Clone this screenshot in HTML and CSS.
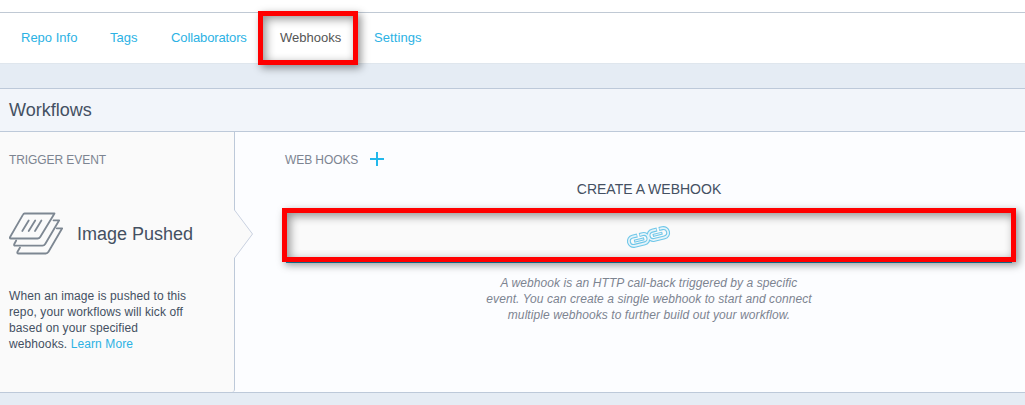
FILE: index.html
```html
<!DOCTYPE html>
<html lang="en">
<head>
<meta charset="utf-8">
<title>Webhooks</title>
<link rel="stylesheet" href="styles.css">
</head>
<body>
<nav class="tabs">
  <a class="tab tab-repo">Repo Info</a>
  <a class="tab tab-tags">Tags</a>
  <a class="tab tab-collab">Collaborators</a>
  <a class="tab tab-active">Webhooks<span class="highlight highlight-tab"></span></a>
  <a class="tab tab-settings">Settings</a>
</nav>
<section class="panel">
  <header class="panel-header"><h1>Workflows</h1></header>
  <div class="panel-body">
    <aside class="trigger">
      <h2 class="label">TRIGGER EVENT</h2>
      <div class="event">
        <svg class="event-icon" width="56" height="44" viewBox="0 0 56 44" fill="none" stroke="#7d8792" stroke-width="1.8" stroke-linejoin="round" stroke-linecap="round">
          <path d="M15.5 1.5H45.5L31.2 25Q30.3 26.5 28.5 26.5H1.8Q.3 26.5 1.1 25L14 2.6Q14.6 1.5 15.5 1.5Z"/>
          <path d="M44.5 8.3H50.2L36.2 32Q35.2 33.7 33.5 33.7H6.3Q4.5 33.7 5.3 32L7.2 28.5"/>
          <path d="M47.8 16.3H53.2L39.5 39.8Q38.5 41.5 36.7 41.5H9.5Q7.7 41.5 8.5 39.7L11 35.5"/>
          <path d="M19.7 8.5L13.3 19M26.2 8.5L19.7 19M32.4 8.5L26 19"/>
        </svg>
        <span class="event-name">Image Pushed</span>
      </div>
      <p class="help">When an image is pushed to this<br>repo, your workflows will kick off<br>based on your specified<br>webhooks. <a>Learn More</a></p>
      <svg class="arrow" width="20" height="50" viewBox="0 0 20 50"><path d="M0 1H.5L18.5 25 .5 49H0Z" fill="#fafafa"/><path d="M.5 1L18.5 25 .5 49" fill="none" stroke="#c9d1e0"/></svg>
    </aside>
    <main class="hooks">
      <div class="hooks-head">
        <h2 class="label">WEB HOOKS</h2>
        <svg class="plus" width="14" height="14" viewBox="0 0 14 14"><path d="M7 0V14M0 7H14" stroke="#22b8eb" stroke-width="2"/></svg>
      </div>
      <h3 class="create">CREATE A WEBHOOK</h3>
      <div class="drop">
        <svg class="chain" width="46" height="24" viewBox="0 0 46 24" fill="none">
          <g transform="translate(22.5 12) rotate(-14)">
            <g stroke="#6fc7e9" stroke-width="4">
              <path d="M-10.5 -4.2H-15.5A4.7 4.7 0 0 0 -15.5 5.2H-5A4.7 4.7 0 0 0 -5 -4.2H-8.5"/>
              <path d="M10 -5.2H5A4.7 4.7 0 0 0 5 4.2H15.5A4.7 4.7 0 0 0 15.5 -5.2H12"/>
              <path d="M-15 .6H-4.5M4.5 -.4H14.5" stroke-width="3"/>
            </g>
            <g stroke="#e6f4fa" stroke-width="1.8">
              <path d="M-11.2 -4.2H-15.5A4.7 4.7 0 0 0 -15.5 5.2H-5A4.7 4.7 0 0 0 -5 -4.2H-7.8"/>
              <path d="M9.3 -5.2H5A4.7 4.7 0 0 0 5 4.2H15.5A4.7 4.7 0 0 0 15.5 -5.2H12.7"/>
              <path d="M-14 .6H-5.5M5.5 -.4H13.5" stroke-width="1"/>
            </g>
          </g>
        </svg>
        <span class="highlight highlight-drop"></span>
      </div>
      <p class="about">A webhook is an HTTP call-back triggered by a specific<br>event. You can create a single webhook to start and connect<br>multiple webhooks to further build out your workflow.</p>
    </main>
  </div>
</section>
</body>
</html>
```
FILE: styles.css
```css
* { box-sizing: border-box; }
body {
  margin: 0;
  padding-top: 12px;
  height: 405px;
  overflow: hidden;
  background: linear-gradient(#fff 12px, #e5ecf4 12px);
  font-family: "Liberation Sans", Arial, sans-serif;
  color: #445062;
}
h1, h2, h3, p { margin: 0; font-weight: normal; }
.tabs {
  display: flex;
  gap: 33px;
  height: 52px;
  padding-left: 21px;
  border-top: 1px solid #c0c9d4;
  border-bottom: 1px solid #dfe6ed;
  background: #fff;
  font-size: 13px;
  line-height: 50px;
}
.tab { color: #2cb2e4; white-space: nowrap; }
.tab-repo { width: 56px; }
.tab-tags { width: 28px; }
.tab-collab { width: 76px; letter-spacing: -.12px; }
.tab-active { position: relative; width: 61px; color: #555; }
.tab-settings { letter-spacing: .08px; }
.highlight {
  position: absolute;
  border: 5px solid #f00;
  box-shadow: 3px 3px 8px rgba(0,0,0,.42), inset 3px 3px 10px rgba(0,0,0,.42);
}
.highlight-tab { left: -22px; top: -2px; width: 100px; height: 54px; }
.panel {
  margin-top: 24px;
  height: 305px;
  border-top: 1px solid #bdc9d9;
  border-bottom: 1px solid #bdc9d9;
  background: #fcfdff;
}
.panel-header {
  height: 43px;
  padding-left: 9px;
  border-bottom: 1px solid #bdc9d9;
  background: #f2f5fa;
}
.panel-header h1 { font-size: 18px; line-height: 43px; }
.panel-body { display: flex; height: 260px; }
.trigger {
  position: relative;
  width: 235px;
  padding: 20px 0 0 9px;
  border-right: 1px solid #bdc9d9;
  border-bottom-right-radius: 3px;
  background: #fafafa;
}
.label {
  font-size: 12px;
  line-height: 16px;
  letter-spacing: -.08px;
  color: #7c8491;
  white-space: nowrap;
}
.event { display: flex; align-items: center; gap: 12px; margin-top: 44px; height: 44px; }
.event-name { font-size: 18px; line-height: 22px; white-space: nowrap; }
.help {
  margin-top: 32px;
  font-size: 12px;
  line-height: 16px;
  letter-spacing: .1px;
  white-space: nowrap;
}
.help a { color: #2cb2e4; }
.arrow { position: absolute; left: 234px; top: 77px; }
.hooks { flex: 1; padding: 20px 13px 0 51px; background: #fcfdff; }
.hooks-head { display: flex; gap: 12px; height: 16px; margin-left: -1px; }
.create { margin-top: 12px; font-size: 14px; line-height: 18px; text-align: center; }
.drop {
  position: relative;
  display: flex;
  justify-content: center;
  margin-top: 15px;
  height: 50px;
  padding-top: 12px;
  border-bottom: 1px solid #1696bd;
  background: #fafafa;
}
.highlight-drop { left: -4px; top: -5px; width: 734px; height: 54px; }
.about {
  margin-top: 12px;
  font-size: 12px;
  font-style: italic;
  line-height: 16px;
  letter-spacing: .08px;
  text-align: center;
  color: #7c8491;
}
```
